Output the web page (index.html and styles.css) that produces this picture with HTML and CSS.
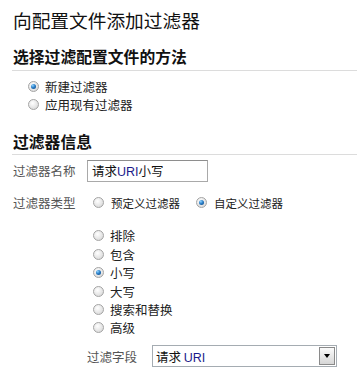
FILE: index.html
```html
<!DOCTYPE html>
<html lang="zh-CN">
<head>
    <meta charset="UTF-8">
    <title>向配置文件添加过滤器</title>
    <link rel="stylesheet" href="styles.css">
</head>
<body>
    <div class="page">
        <h1>向配置文件添加过滤器</h1>

        <h2>选择过滤配置文件的方法</h2>
        <div class="method-list">
            <div class="opt"><span class="radio checked"></span>新建过滤器</div>
            <div class="opt"><span class="radio"></span>应用现有过滤器</div>
        </div>

        <h2 class="second">过滤器信息</h2>

        <div class="row name-row">
            <div class="label">过滤器名称</div>
            <div class="field">
                <div class="input-box">请求<span class="latin">URI</span>小写</div>
            </div>
        </div>

        <div class="row type-row">
            <div class="label">过滤器类型</div>
            <div class="field">
                <div class="type-opts">
                    <div class="opt"><span class="radio"></span>预定义过滤器</div>
                    <div class="opt"><span class="radio checked"></span>自定义过滤器</div>
                </div>
            </div>
        </div>

        <div class="row">
            <div class="label"></div>
            <div class="field">
                <div class="custom-list">
                    <div class="opt"><span class="radio"></span>排除</div>
                    <div class="opt"><span class="radio"></span>包含</div>
                    <div class="opt"><span class="radio checked"></span>小写</div>
                    <div class="opt"><span class="radio"></span>大写</div>
                    <div class="opt"><span class="radio"></span>搜索和替换</div>
                    <div class="opt"><span class="radio"></span>高级</div>
                </div>
                <div class="field-row">
                    <div class="sub-label">过滤字段</div>
                    <div class="select-box">
                        <span class="select-text">请求 <span class="latin">URI</span></span>
                        <span class="select-btn"><span class="arrow"></span></span>
                    </div>
                </div>
            </div>
        </div>
    </div>
</body>
</html>
```

FILE: styles.css
```css
body {
    margin: 0;
    background: #fff;
    color: #222;
    font-family: "Noto Sans CJK SC", "Liberation Sans", sans-serif;
    font-size: 12.5px;
}

.page {
    padding: 0 1px 0 12px;
}

h1 {
    margin: 10px 0 0 1px;
    font-size: 18.7px;
    font-weight: normal;
    line-height: 19px;
    color: #111;
}

h2 {
    margin: 18px 0 0;
    padding: 0 0 3px 1px;
    font-size: 15.8px;
    font-weight: bold;
    line-height: 20px;
    color: #111;
    border-bottom: 1px solid #dcdcdc;
}

h2.second {
    margin-top: 18px;
    padding-bottom: 2px;
}

.latin {
    font-family: "Liberation Sans", sans-serif;
    color: #1a1a8a;
}

.opt {
    display: flex;
    align-items: center;
    height: 18.4px;
    white-space: nowrap;
}

.radio {
    width: 11px;
    height: 11px;
    box-sizing: border-box;
    border: 1px solid #a4a4a4;
    border-radius: 50%;
    background: radial-gradient(circle at 40% 35%, #ffffff 0%, #e6e6e6 55%, #cfcfcf 100%);
    margin-right: 6px;
    display: flex;
    align-items: center;
    justify-content: center;
    flex: none;
}

.radio.checked::after {
    content: "";
    width: 5px;
    height: 5px;
    border-radius: 50%;
    background: radial-gradient(circle at 35% 30%, #8fd3ff 0%, #2a7fc8 45%, #0b3f7a 100%);
}

.method-list {
    margin-top: 6px;
    padding-left: 16px;
}

.row {
    display: flex;
}

.label {
    width: 75px;
    flex: none;
    color: #555;
    padding-left: 1px;
    box-sizing: border-box;
}

.field {
    flex: 1;
}

.name-row {
    margin-top: 5px;
    align-items: center;
}

.input-box {
    width: 121px;
    height: 22px;
    box-sizing: border-box;
    border: 1px solid #a9a9a9;
    border-top-color: #8e8e8e;
    padding-left: 4px;
    line-height: 20px;
    color: #111;
}

.type-row {
    margin-top: 12px;
    align-items: center;
    height: 18px;
}

.type-opts {
    display: flex;
    gap: 16px;
    padding-left: 6px;
    font-size: 11.5px;
}

.type-opts .radio {
    margin-right: 7px;
}

.custom-list {
    margin-top: 15px;
    padding-left: 6px;
}

.field-row {
    display: flex;
    align-items: center;
    margin-top: 8px;
}

.sub-label {
    width: 65px;
    flex: none;
    color: #555;
}

.select-box {
    width: 185px;
    height: 22px;
    box-sizing: border-box;
    border: 1px solid #a5acb2;
    display: flex;
    align-items: center;
    justify-content: space-between;
    padding: 1px;
    color: #111;
}

.select-text {
    padding-left: 2px;
}

.select-btn {
    width: 16px;
    height: 18px;
    box-sizing: border-box;
    border: 1px solid #8a8a8a;
    background: linear-gradient(#fbfbfb, #d6d6d6);
    display: flex;
    align-items: center;
    justify-content: center;
}

.arrow {
    width: 0;
    height: 0;
    border-left: 3.5px solid transparent;
    border-right: 3.5px solid transparent;
    border-top: 4px solid #000;
}
```
